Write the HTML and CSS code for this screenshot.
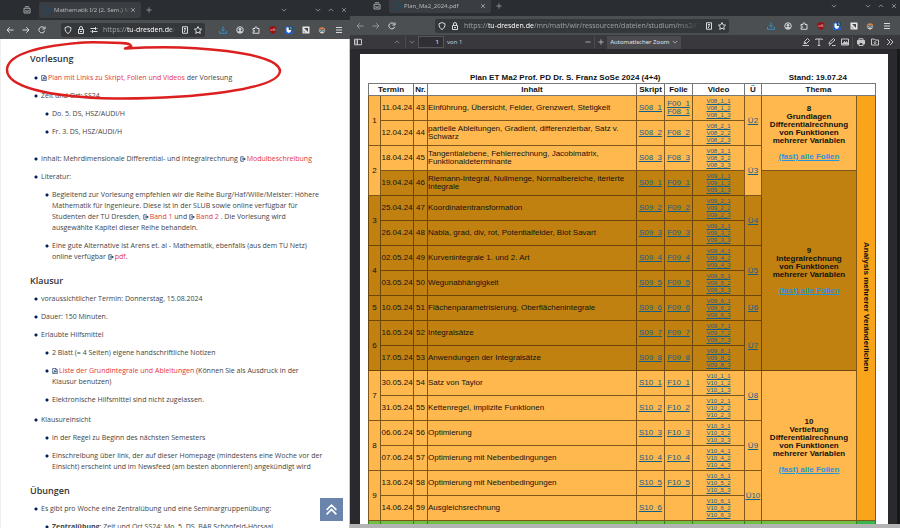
FILE: index.html
```html
<!DOCTYPE html>
<html lang="de">
<head>
    <meta charset="UTF-8">
    <meta name="viewport" content="width=device-width, initial-scale=1.0">
    <title>Mathematik I/2 (2. Sem.)</title>
    <link rel="stylesheet" href="styles.css">
</head>
<body>
    <!-- Icons -->
    <svg class="sprite" aria-hidden="true">
        <symbol id="i-box" viewBox="0 0 16 16"><path d="M4 1.500h8M2 4.500h12v9.500H2zM5.500 8v2.500h5V8"/></symbol>
        <symbol id="i-tu" viewBox="0 0 16 16"><path d="M5 1h6l4 4v6l-4 4H5l-4-4V5zM3 6h5M5.500 6v5M9 6v4l2 2 2-2V6"/></symbol>
        <symbol id="i-close" viewBox="0 0 16 16"><path d="M3 3l10 10M13 3L3 13"/></symbol>
        <symbol id="i-plus" viewBox="0 0 16 16"><path d="M8 1v14M1 8h14"/></symbol>
        <symbol id="i-minus" viewBox="0 0 16 16"><path d="M1 8h14"/></symbol>
        <symbol id="i-down" viewBox="0 0 16 16"><path d="M2 5l6 6 6-6"/></symbol>
        <symbol id="i-up" viewBox="0 0 16 16"><path d="M2 11l6-6 6 6"/></symbol>
        <symbol id="i-back" viewBox="0 0 16 16"><path d="M15 8H2M7.500 2.500L2 8l5.500 5.500"/></symbol>
        <symbol id="i-fwd" viewBox="0 0 16 16"><path d="M1 8h13M8.500 2.500L14 8l-5.500 5.500"/></symbol>
        <symbol id="i-reload" viewBox="0 0 16 16"><path d="M13.500 9.500A6 6 0 1 1 12.500 4M14 1v5H9"/></symbol>
        <symbol id="i-shield" viewBox="0 0 16 16"><path d="M8 1l6 2.500c0 6-2 9.500-6 11.500-4-2-6-5.500-6-11.500z"/></symbol>
        <symbol id="i-lock" viewBox="0 0 16 16"><path d="M3 7h10v8H3zM5 7V4a3 3 0 0 1 6 0v3M6 11h4"/></symbol>
        <symbol id="i-perm" viewBox="0 0 16 16"><path d="M1 5h9M6 11h9M13 5h2M1 11h2M11 2v6M5 8v6"/></symbol>
        <symbol id="i-reader" viewBox="0 0 16 16"><path d="M3 1.500h10v13H3zM6 5h4M6 8h4M6 11h2"/></symbol>
        <symbol id="i-star" viewBox="0 0 16 16"><path d="M8 1l2.200 4.700 5 .6-3.700 3.500 1 5.100L8 12.400l-4.500 2.500 1-5.100L.8 6.300l5-.6z"/></symbol>
        <symbol id="i-load" viewBox="0 0 16 16"><path d="M8 1v9M4 6.500L8 10.500l4-4M1 10v4.500h14V10"/></symbol>
        <symbol id="i-account" viewBox="0 0 16 16"><circle cx="8" cy="8" r="6.500"/><circle cx="8" cy="6.500" r="2" fill="currentColor"/><path d="M4.500 12.500c0-3 7-3 7 0z" fill="currentColor"/></symbol>
        <symbol id="i-ext" viewBox="0 0 16 16"><path d="M2 5h4V3.500a2 2 0 0 1 4 0V5h4v9.500H2v-3h1.500a1.500 1.500 0 0 0 0-3H2z"/></symbol>
        <symbol id="i-ublock" viewBox="0 0 16 16"><path d="M8 0l7 2.500c0 7-2 11-7 13.500C3 13.500 1 9.500 1 2.500z" fill="#9b0f12" stroke="none"/><path d="M4 6v3h2.500V6M9 5.500h3v3.500H9z" stroke="#e9c9c9" stroke-width="1"/></symbol>
        <symbol id="i-bw" viewBox="0 0 16 16"><path d="M0 1h15v15H0z" fill="#1a5fe0" stroke="none"/><path d="M3 3h9v6c0 2-2 4-4.500 5C5 13 3 11 3 9z" fill="#fff" stroke="none"/><path d="M7.500 0H16v8H7.500z" fill="#1d4a66" stroke="none"/><path d="M10 6h3V4h-2.500V2H13" stroke="#a9c6d6" stroke-width="1"/></symbol>
        <symbol id="i-note" viewBox="0 0 16 16"><path d="M1 1h14v14H1z" fill="#e6e6e6" stroke="none"/><path d="M4 4h8v8z" fill="#44484c" stroke="none"/><path d="M3 8l5 5H3z" fill="#9a9da0" stroke="none"/></symbol>
        <symbol id="i-face" viewBox="0 0 16 16"><path d="M1 9c0-9 14-9 14 0z" fill="#e0824c" stroke="none"/><path d="M2 8h12c0 9-12 9-12 0z" fill="#e5d3c5" stroke="none"/><circle cx="5.500" cy="9" r="2" stroke="#2f6a85"/><circle cx="10.500" cy="9" r="2" stroke="#2f6a85"/></symbol>
        <symbol id="i-menu" viewBox="0 0 16 16"><path d="M2 3h12M2 8h12M2 13h12"/></symbol>
        <symbol id="i-side" viewBox="0 0 16 16"><path d="M1 2.500h14v11H1zM7 2.500v11M3 5.500h2M3 8h2M3 10.500h2"/></symbol>
        <symbol id="i-mark" viewBox="0 0 16 16"><path d="M4 11l1-4 6-6 4 4-6 6zM5 7l4 4M1 15h13"/></symbol>
        <symbol id="i-text" viewBox="0 0 16 16"><path d="M1.500 4V2h13v2M8 2v13M5.500 15h5"/></symbol>
        <symbol id="i-pen" viewBox="0 0 16 16"><path d="M2 12l1-4 8-7 3 3-8 7zM8 15h7M2 15l3-2"/></symbol>
        <symbol id="i-image" viewBox="0 0 16 16"><path d="M1 2h14v12H1z"/><path d="M3 12l4-5 2 2 2-2 3 5z" fill="currentColor"/></symbol>
        <symbol id="i-print" viewBox="0 0 16 16"><path d="M4 1.500h8V5H4z"/><path d="M1 5h14v7h-3V9H4v3H1z" fill="currentColor"/><path d="M4 9h8v6H4z"/></symbol>
        <symbol id="i-save" viewBox="0 0 16 16"><path d="M1 14V2h5l2 2h7v10zM8 6v5M5.500 9L8 11.500 10.500 9"/></symbol>
        <symbol id="i-more" viewBox="0 0 16 16"><path d="M2 2l6 6-6 6M8 2l6 6-6 6"/></symbol>
        <symbol id="i-pdf" viewBox="0 0 16 16"><path d="M2 1h8l4 4v10H2zM10 1v4h4M5 12c2-2 3-4 2.500-6C7 8 9 10 12 10c-3 0-5 0-7 2"/></symbol>
        <symbol id="i-out" viewBox="0 0 16 16"><path d="M9 2H2v12h7v-2M9 2v2"/><path d="M5 6.500h5V4l6 4-6 4V9.500H5z" fill="currentColor" stroke="none"/></symbol>
        <symbol id="i-top" viewBox="0 0 16 16"><path d="M2 8.500l6-6 6 6M2 14l6-6 6 6"/></symbol>
    </svg>

    <!-- Linkes Fenster: Webseite -->
    <section class="window window-left">
        <div class="tabs">
            <button class="tab-box" aria-label="Verlauf"><svg class="icon"><use href="#i-box"/></svg></button>
            <div class="tab"><svg class="icon fav"><use href="#i-tu"/></svg><span class="tab-title">Mathematik I/2 (2. Sem.) M</span><button aria-label="Tab schließen"><svg class="icon small"><use href="#i-close"/></svg></button></div>
            <button class="tab-new" aria-label="Neuer Tab"><svg class="icon small"><use href="#i-plus"/></svg></button>
            <div class="window-buttons">
                <button class="tab-list" aria-label="Tabs"><svg class="icon small"><use href="#i-down"/></svg></button>
                <button aria-label="Minimieren"><svg class="icon small"><use href="#i-down"/></svg></button>
                <button aria-label="Maximieren"><svg class="icon small"><use href="#i-up"/></svg></button>
                <button aria-label="Schließen"><svg class="icon small"><use href="#i-close"/></svg></button>
            </div>
        </div>
        <div class="nav">
            <button aria-label="Zurück"><svg class="icon"><use href="#i-back"/></svg></button>
            <button aria-label="Vor"><svg class="icon"><use href="#i-fwd"/></svg></button>
            <button aria-label="Neu laden"><svg class="icon"><use href="#i-reload"/></svg></button>
            <div class="url-bar">
                <svg class="icon"><use href="#i-shield"/></svg>
                <svg class="icon"><use href="#i-lock"/></svg>
                <svg class="icon"><use href="#i-perm"/></svg>
                <div class="url" role="textbox" aria-label="Adresse" contenteditable="true">https://<b>tu-dresden.de</b>/m</div>
                <svg class="icon"><use href="#i-reader"/></svg>
                <svg class="icon"><use href="#i-star"/></svg>
            </div>
            <div class="addons">
                <button class="load" aria-label="Downloads"><svg class="icon"><use href="#i-load"/></svg></button>
                <button aria-label="Konto"><svg class="icon"><use href="#i-account"/></svg></button>
                <button aria-label="Erweiterungen"><svg class="icon"><use href="#i-ext"/></svg></button>
                <button aria-label="Werbeblocker"><svg class="icon"><use href="#i-ublock"/></svg></button>
                <button aria-label="Passwörter"><svg class="icon"><use href="#i-bw"/></svg></button>
                <button aria-label="Notizen"><svg class="icon"><use href="#i-note"/></svg></button>
                <button aria-label="Profil"><svg class="icon"><use href="#i-face"/></svg></button>
                <button aria-label="Menü"><svg class="icon"><use href="#i-menu"/></svg></button>
            </div>
        </div>

        <main class="page">
            <h2>Vorlesung</h2>
            <ul>
                <li><a href="#"><svg class="link-icon"><use href="#i-pdf"/></svg>Plan mit Links zu Skript, Folien und Videos</a> der Vorlesung</li>
                <li>Zeit und Ort: SS24
                    <ul class="times">
                        <li>Do. 5. DS, HSZ/AUDI/H</li>
                        <li>Fr. 3. DS, HSZ/AUDI/H</li>
                    </ul>
                </li>
                <li>Inhalt: Mehrdimensionale Differential- und Integralrechnung <a href="#"><svg class="link-icon"><use href="#i-out"/></svg>Modulbeschreibung</a></li>
                <li>Literatur:
                    <ul>
                        <li>Begleitend zur Vorlesung empfehlen wir die Reihe Burg/Haf/Wille/Meister: Höhere<br>Mathematik für Ingenieure. Diese ist in der SLUB sowie online verfügbar für<br>Studenten der TU Dresden, <a href="#"><svg class="link-icon"><use href="#i-out"/></svg>Band 1</a> und <a href="#"><svg class="link-icon"><use href="#i-out"/></svg>Band 2</a> . Die Vorlesung wird<br>ausgewählte Kapitel dieser Reihe behandeln.</li>
                        <li>Eine gute Alternative ist Arens et. al - Mathematik, ebenfalls (aus dem TU Netz)<br>online verfügbar <a href="#"><svg class="link-icon"><use href="#i-out"/></svg>pdf</a>.</li>
                    </ul>
                </li>
            </ul>
            <h2>Klausur</h2>
            <ul>
                <li>voraussichtlicher Termin: Donnerstag, 15.08.2024</li>
                <li>Dauer: 150 Minuten.</li>
                <li>Erlaubte Hilfsmittel
                    <ul class="tools">
                        <li>2 Blatt (= 4 Seiten) eigene handschriftliche Notizen</li>
                        <li><a href="#"><svg class="link-icon"><use href="#i-pdf"/></svg>Liste der Grundintegrale und Ableitungen</a> (Können Sie als Ausdruck in der<br>Klausur benutzen)</li>
                        <li>Elektronische Hilfsmittel sind nicht zugelassen.</li>
                    </ul>
                </li>
                <li>Klausureinsicht
                    <ul>
                        <li>in der Regel zu Beginn des nächsten Semesters</li>
                        <li>Einschreibung über link, der auf dieser Homepage (mindestens eine Woche vor der<br>Einsicht) erscheint und im Newsfeed (am besten abonnieren!) angekündigt wird</li>
                    </ul>
                </li>
            </ul>
            <h2>Übungen</h2>
            <ul>
                <li>Es gibt pro Woche eine Zentralübung und eine Seminargruppenübung:
                    <ul>
                        <li><b>Zentralübung</b>: Zeit und Ort SS24: Mo. 5. DS, BAR Schönfeld-Hörsaal</li>
                    </ul>
                </li>
            </ul>
        </main>
        <button class="to-top" aria-label="Nach oben"><svg class="icon"><use href="#i-top"/></svg></button>
        <svg class="marker" viewBox="0 0 350 110" aria-hidden="true"><path d="M125 48.500C128 47 132 47 131 46C130 42 118 43 105 42.500C93 42 85 42 77 43C45 46 7 53 7 70C7 86 45 97 115 98.500C190 99 279 90 280 71C279 52 190 44 125 48.500"/></svg>
    </section>

    <!-- Rechtes Fenster: PDF -->
    <section class="window window-right">
        <div class="tabs">
            <button class="tab-box" aria-label="Verlauf"><svg class="icon"><use href="#i-box"/></svg></button>
            <div class="tab"><svg class="icon fav"><use href="#i-tu"/></svg><span class="tab-title">Plan_Ma2_2024.pdf</span><button aria-label="Tab schließen"><svg class="icon small"><use href="#i-close"/></svg></button></div>
            <button class="tab-new" aria-label="Neuer Tab"><svg class="icon small"><use href="#i-plus"/></svg></button>
            <div class="window-buttons">
                <button class="tab-list" aria-label="Tabs"><svg class="icon small"><use href="#i-down"/></svg></button>
                <button aria-label="Minimieren"><svg class="icon small"><use href="#i-down"/></svg></button>
                <button aria-label="Maximieren"><svg class="icon small"><use href="#i-up"/></svg></button>
                <button aria-label="Schließen"><svg class="icon small"><use href="#i-close"/></svg></button>
            </div>
        </div>
        <div class="nav">
            <button class="off" aria-label="Zurück"><svg class="icon"><use href="#i-back"/></svg></button>
            <button class="off" aria-label="Vor"><svg class="icon"><use href="#i-fwd"/></svg></button>
            <button aria-label="Neu laden"><svg class="icon"><use href="#i-reload"/></svg></button>
            <div class="url-bar">
                <svg class="icon"><use href="#i-shield"/></svg>
                <svg class="icon"><use href="#i-lock"/></svg>
                <div class="url" role="textbox" aria-label="Adresse" contenteditable="true">https://<b>tu-dresden.de</b>/mn/math/wir/ressourcen/dateien/studium/ma2/Plan_M</div>
                <svg class="icon"><use href="#i-reader"/></svg>
                <svg class="icon"><use href="#i-star"/></svg>
            </div>
            <div class="addons">
                <button class="load" aria-label="Downloads"><svg class="icon"><use href="#i-load"/></svg></button>
                <button aria-label="Konto"><svg class="icon"><use href="#i-account"/></svg></button>
                <button aria-label="Erweiterungen"><svg class="icon"><use href="#i-ext"/></svg></button>
                <button aria-label="Werbeblocker"><svg class="icon"><use href="#i-ublock"/></svg></button>
                <button aria-label="Passwörter"><svg class="icon"><use href="#i-bw"/></svg></button>
                <button aria-label="Notizen"><svg class="icon"><use href="#i-note"/></svg></button>
                <button aria-label="Profil"><svg class="icon"><use href="#i-face"/></svg></button>
                <button aria-label="Menü"><svg class="icon"><use href="#i-menu"/></svg></button>
            </div>
        </div>
        <div class="pdf-bar">
            <div class="pdf-group pdf-left">
                <button class="sidebar" aria-label="Seitenleiste"><svg class="icon"><use href="#i-side"/></svg></button>
                <button class="off" aria-label="Vorherige Seite"><svg class="icon small"><use href="#i-up"/></svg></button>
                <button class="off" aria-label="Nächste Seite"><svg class="icon small"><use href="#i-down"/></svg></button>
                <input id="page-number" type="text" value="1">
                <label for="page-number">von 1</label>
            </div>
            <div class="pdf-group pdf-zoom">
                <button aria-label="Verkleinern"><svg class="icon small"><use href="#i-minus"/></svg></button>
                <button aria-label="Vergrößern"><svg class="icon small"><use href="#i-plus"/></svg></button>
                <span class="select">
                    <select aria-label="Zoom"><option>Automatischer Zoom</option></select>
                    <svg class="icon small"><use href="#i-down"/></svg>
                </span>
            </div>
            <div class="pdf-group pdf-tools">
                <button aria-label="Hervorheben"><svg class="icon"><use href="#i-mark"/></svg></button>
                <button aria-label="Text"><svg class="icon"><use href="#i-text"/></svg></button>
                <button aria-label="Zeichnen"><svg class="icon"><use href="#i-pen"/></svg></button>
                <button aria-label="Bild"><svg class="icon"><use href="#i-image"/></svg></button>
                <button class="print" aria-label="Drucken"><svg class="icon"><use href="#i-print"/></svg></button>
                <button aria-label="Speichern"><svg class="icon"><use href="#i-save"/></svg></button>
                <button class="more" aria-label="Werkzeuge"><svg class="icon"><use href="#i-more"/></svg></button>
            </div>
        </div>

        <div class="viewer">
            <div class="paper">
                <header class="paper-head">
                    <h1>Plan ET Ma2 Prof. PD Dr. S. Franz SoSe 2024 (4+4)</h1>
                    <strong>Stand: 19.07.24</strong>
                </header>
                <table class="plan">
                    <colgroup>
                        <col class="c-week"><col class="c-date"><col class="c-nr"><col><col class="c-link"><col class="c-link"><col class="c-video"><col class="c-ex"><col class="c-topic"><col class="c-side">
                    </colgroup>
                    <thead>
                        <tr><th colspan="2">Termin</th><th>Nr.</th><th>Inhalt</th><th>Skript</th><th>Folie</th><th>Video</th><th>Ü</th><th colspan="2">Thema</th></tr>
                    </thead>
                    <tbody>
                        <tr>
                            <td rowspan="2">1</td><td>11.04.24</td><td>43</td><td class="text">Einführung, Übersicht, Felder, Grenzwert, Stetigkeit</td>
                            <td><a href="#">S08_1</a></td><td><a href="#">F00_1</a><br><a href="#">F08_1</a></td>
                            <td class="video"><a href="#">V08_1_1</a><a href="#">V08_1_2</a><a href="#">V08_1_3</a></td>
                            <td rowspan="2"><a href="#">Ü2</a></td>
                            <td class="topic" rowspan="3">8<br>Grundlagen<br>Differentialrechnung<br>von Funktionen<br>mehrerer Variablen<br><br><a href="#">(fast) alle Folien</a></td>
                            <td class="side" rowspan="17"><span>Analysis mehrerer Veränderlichen</span></td>
                        </tr>
                        <tr>
                            <td>12.04.24</td><td>44</td><td class="text">partielle Ableitungen, Gradient, differenzierbar, Satz v.<br>Schwarz</td>
                            <td><a href="#">S08_2</a></td><td><a href="#">F08_2</a></td>
                            <td class="video"><a href="#">V08_2_1</a><a href="#">V08_2_2</a><a href="#">V08_2_3</a></td>
                        </tr>
                        <tr>
                            <td rowspan="2">2</td><td>18.04.24</td><td>45</td><td class="text">Tangentialebene, Fehlerrechnung, Jacobimatrix,<br>Funktionaldeterminante</td>
                            <td><a href="#">S08_3</a></td><td><a href="#">F08_3</a></td>
                            <td class="video"><a href="#">V08_3_1</a><a href="#">V08_3_2</a><a href="#">V08_3_3</a></td>
                            <td rowspan="2"><a href="#">Ü3</a></td>
                        </tr>
                        <tr class="integral">
                            <td>19.04.24</td><td>46</td><td class="text">Riemann-Integral, Nullmenge, Normalbereiche, iterierte<br>Integrale</td>
                            <td><a href="#">S09_1</a></td><td><a href="#">F09_1</a></td>
                            <td class="video"><a href="#">V09_1_1</a><a href="#">V09_1_2</a><a href="#">V09_1_3</a></td>
                            <td class="topic" rowspan="8">9<br>Integralrechnung<br>von Funktionen<br>mehrerer Variablen<br><br><a href="#">(fast) alle Folien</a></td>
                        </tr>
                        <tr class="integral">
                            <td rowspan="2">3</td><td>25.04.24</td><td>47</td><td class="text">Koordinatentransformation</td>
                            <td><a href="#">S09_2</a></td><td><a href="#">F09_2</a></td>
                            <td class="video"><a href="#">V09_2_1</a><a href="#">V09_2_2</a><a href="#">V09_2_3</a></td>
                            <td rowspan="2"><a href="#">Ü4</a></td>
                        </tr>
                        <tr class="integral">
                            <td>26.04.24</td><td>48</td><td class="text">Nabla, grad, div, rot, Potentialfelder, Biot Savart</td>
                            <td><a href="#">S09_3</a></td><td><a href="#">F09_3</a></td>
                            <td class="video"><a href="#">V09_3_1</a><a href="#">V09_3_2</a><a href="#">V09_3_3</a></td>
                        </tr>
                        <tr class="integral">
                            <td rowspan="2">4</td><td>02.05.24</td><td>49</td><td class="text">Kurvenintegrale 1. und 2. Art</td>
                            <td><a href="#">S09_4</a></td><td><a href="#">F09_4</a></td>
                            <td class="video"><a href="#">V09_4_1</a><a href="#">V09_4_2</a><a href="#">V09_4_3</a></td>
                            <td rowspan="2"><a href="#">Ü5</a></td>
                        </tr>
                        <tr class="integral">
                            <td>03.05.24</td><td>50</td><td class="text">Wegunabhängigkeit</td>
                            <td><a href="#">S09_5</a></td><td><a href="#">F09_5</a></td>
                            <td class="video"><a href="#">V09_5_1</a><a href="#">V09_5_2</a><a href="#">V09_5_3</a></td>
                        </tr>
                        <tr class="integral">
                            <td>5</td><td>10.05.24</td><td>51</td><td class="text">Flächenparametrisierung, Oberflächenintegrale</td>
                            <td><a href="#">S09_6</a></td><td><a href="#">F09_6</a></td>
                            <td class="video"><a href="#">V09_6_1</a><a href="#">V09_6_2</a><a href="#">V09_6_3</a></td>
                            <td><a href="#">Ü6</a></td>
                        </tr>
                        <tr class="integral">
                            <td rowspan="2">6</td><td>16.05.24</td><td>52</td><td class="text">Integralsätze</td>
                            <td><a href="#">S09_7</a></td><td><a href="#">F09_7</a></td>
                            <td class="video"><a href="#">V09_7_1</a><a href="#">V09_7_2</a><a href="#">V09_7_3</a></td>
                            <td rowspan="2"><a href="#">Ü7</a></td>
                        </tr>
                        <tr class="integral">
                            <td>17.05.24</td><td>53</td><td class="text">Anwendungen der Integralsätze</td>
                            <td><a href="#">S09_8</a></td><td><a href="#">F09_8</a></td>
                            <td class="video"><a href="#">V09_8_1</a><a href="#">V09_8_2</a><a href="#">V09_8_3</a></td>
                        </tr>
                        <tr>
                            <td rowspan="2">7</td><td>30.05.24</td><td>54</td><td class="text">Satz von Taylor</td>
                            <td><a href="#">S10_1</a></td><td><a href="#">F10_1</a></td>
                            <td class="video"><a href="#">V10_1_1</a><a href="#">V10_1_2</a><a href="#">V10_1_3</a></td>
                            <td rowspan="2"><a href="#">Ü8</a></td>
                            <td class="topic" rowspan="6">10<br>Vertiefung<br>Differentialrechnung<br>von Funktionen<br>mehrerer Variablen<br><br><a href="#">(fast) alle Folien</a></td>
                        </tr>
                        <tr>
                            <td>31.05.24</td><td>55</td><td class="text">Kettenregel, implizite Funktionen</td>
                            <td><a href="#">S10_2</a></td><td><a href="#">F10_2</a></td>
                            <td class="video"><a href="#">V10_2_1</a><a href="#">V10_2_2</a><a href="#">V10_2_3</a></td>
                        </tr>
                        <tr>
                            <td rowspan="2">8</td><td>06.06.24</td><td>56</td><td class="text">Optimierung</td>
                            <td><a href="#">S10_3</a></td><td><a href="#">F10_3</a></td>
                            <td class="video"><a href="#">V10_3_1</a><a href="#">V10_3_2</a><a href="#">V10_3_3</a></td>
                            <td rowspan="2"><a href="#">Ü9</a></td>
                        </tr>
                        <tr>
                            <td>07.06.24</td><td>57</td><td class="text">Optimierung mit Nebenbedingungen</td>
                            <td><a href="#">S10_4</a></td><td><a href="#">F10_4</a></td>
                            <td class="video"><a href="#">V10_4_1</a><a href="#">V10_4_2</a><a href="#">V10_4_3</a></td>
                        </tr>
                        <tr>
                            <td rowspan="2">9</td><td>13.06.24</td><td>58</td><td class="text">Optimierung mit Nebenbedingungen</td>
                            <td><a href="#">S10_5</a></td><td><a href="#">F10_5</a></td>
                            <td class="video"><a href="#">V10_5_1</a><a href="#">V10_5_2</a><a href="#">V10_5_3</a></td>
                            <td rowspan="2"><a href="#">Ü10</a></td>
                        </tr>
                        <tr>
                            <td>14.06.24</td><td>59</td><td class="text">Ausgleichsrechnung</td>
                            <td><a href="#">S10_6</a></td><td></td>
                            <td class="video"><a href="#">V10_6_1</a><a href="#">V10_6_2</a><a href="#">V10_6_3</a></td>
                        </tr>
                        <tr class="green"><td></td><td></td><td></td><td></td><td></td><td></td><td></td><td></td><td></td><td class="side"></td></tr>
                    </tbody>
                </table>
            </div>
        </div>
        <div class="bottom-edge"></div>
    </section>
</body>
</html>
```
FILE: styles.css
```css
* {
    box-sizing: border-box;
}
body {
    margin: 0;
    height: 100vh;
    display: grid;
    grid-template-columns: 7fr 11fr;
    overflow: hidden;
    font-family: "Noto Sans", sans-serif;
    font-size: 7px;
    background: #2a2e32;
}
button {
    display: flex;
    align-items: center;
    justify-content: center;
    padding: 0;
    border: none;
    background: none;
    color: inherit;
    font: inherit;
    cursor: pointer;
}
.sprite {
    position: absolute;
    width: 0;
    height: 0;
}
.icon {
    width: 8px;
    height: 8px;
    flex: none;
    fill: none;
    stroke: currentColor;
    stroke-width: 2;
}
.icon.small {
    width: 6px;
    height: 6px;
}

/* Fenster */
.window {
    position: relative;
    display: flex;
    flex-direction: column;
    min-width: 0;
    height: 100vh;
    overflow: hidden;
    color: #d8d9da;
}
.tabs {
    display: flex;
    align-items: center;
    flex: none;
    height: 20px;
    padding-left: 19px;
    background: #2a2e32;
    color: #a4a7a9;
}
.tab-box {
    width: 16px;
    margin-right: 4px;
}
.tab {
    display: flex;
    align-items: center;
    width: 102px;
    height: 16px;
    padding: 0 5px 0 4px;
    border-radius: 2px;
    background: #3a3e42;
    color: #b4b7b9;
}
.fav {
    color: #1f4a63;
}
.tab-title {
    flex: 1;
    min-width: 0;
    margin-left: 3px;
    overflow: hidden;
    white-space: nowrap;
    font-size: 6px;
    mask-image: linear-gradient(to right, #000 85%, transparent);
}
.tab-new {
    width: 16px;
}
.window-buttons {
    display: flex;
    margin-left: auto;
}
.window-buttons button {
    width: 13px;
}
.window-buttons .tab-list {
    margin-right: 21px;
}
.nav {
    display: flex;
    align-items: center;
    flex: none;
    height: 19px;
    padding: 0 3px 0 2px;
    background: #4b4f52;
}
.nav button {
    width: 16px;
    height: 16px;
}
.off {
    color: #929597;
}
.url-bar {
    display: flex;
    align-items: center;
    gap: 5px;
    flex: 1;
    min-width: 0;
    height: 14px;
    margin: 0 10px 0 11px;
    padding: 0 3px;
    border-radius: 2px;
    background: #35383b;
}
.url {
    flex: 1;
    min-width: 0;
    overflow: hidden;
    white-space: nowrap;
    color: #a0a3a5;
    font-family: "Open Sans", sans-serif;
    mask-image: linear-gradient(to right, #000 90%, transparent);
}
.url b {
    font-weight: 400;
    color: #fff;
}
.addons {
    display: flex;
    justify-content: space-between;
    flex: 0 0 132px;
}
.addons .load {
    color: #3a8fc0;
}
.window-right .tabs {
    height: 16px;
    padding-bottom: 4px;
}
.window-right .tab {
    height: 14px;
}
.window-right .nav {
    padding-right: 5px;
}
.window-right .url-bar {
    margin: 0 34px 0 35px;
}

/* Webseite */
.page {
    flex: 1;
    padding: 13px 20px 0 29px;
    overflow: hidden;
    background: #fff;
    border-left: 1px solid #eee;
    border-right: 1px solid #c8c8c8;
    color: #444;
    font-family: "Open Sans", sans-serif;
    font-size: 7px;
    line-height: 11px;
}
.page h2 {
    margin: 12px 0 5px;
    font-size: 9px;
    font-weight: 600;
    line-height: 14px;
    color: #333;
}
.page h2:first-child {
    margin: 0 0 6px;
}
.page ul {
    margin: 0;
    padding: 0;
    list-style: none;
}
.page li {
    margin-top: 7px;
    padding-left: 11px;
    background: radial-gradient(circle at 6px 6px, #00205e 1px, transparent 2px);
    white-space: nowrap;
}
.page h2 + ul > li:first-child {
    margin-top: 0;
}
.page .times {
    margin-bottom: 16px;
}
.page .tools {
    margin-bottom: 9px;
}
.page a {
    color: #e5353b;
    text-decoration: none;
}
.link-icon {
    width: 6px;
    height: 6px;
    margin-right: 1px;
    fill: none;
    stroke: currentColor;
    stroke-width: 2;
    color: #1c3f70;
    vertical-align: -1px;
}
.to-top {
    position: absolute;
    right: 7px;
    bottom: 7px;
    width: 23px;
    height: 23px;
    background: #6a84ab;
    color: #fff;
}
.to-top .icon {
    width: 13px;
    height: 13px;
}
.marker {
    position: absolute;
    top: 0;
    left: 0;
    width: 350px;
    height: 110px;
    fill: none;
    stroke: #dc1f1f;
    stroke-width: 2.5;
    stroke-linecap: round;
    pointer-events: none;
}

/* PDF-Leiste */
.pdf-bar {
    display: flex;
    align-items: center;
    justify-content: space-between;
    flex: none;
    height: 14px;
    padding: 0 3px 0 1px;
    background: #38383d;
    color: #c9c9cb;
    font-size: 6px;
}
.pdf-group {
    display: flex;
    align-items: center;
}
.pdf-bar button {
    width: 13px;
    height: 13px;
}
.pdf-left .sidebar {
    margin-right: 26px;
}
.pdf-left .off + .off {
    margin-left: 2px;
    border-left: 1px solid #4a4a4f;
}
.pdf-left input {
    width: 26px;
    height: 12px;
    margin-right: 3px;
    padding: 0 4px;
    border: 1px solid #55555a;
    background: #2f2f34;
    color: #eee;
    font: inherit;
    text-align: right;
}
.pdf-zoom button + button {
    border-left: 1px solid #4a4a4f;
}
.select {
    display: flex;
    align-items: center;
    width: 74px;
    height: 13px;
    padding: 0 3px;
    background: #4a4a4f;
}
.select select {
    flex: 1;
    min-width: 0;
    padding: 0;
    border: none;
    appearance: none;
    background: none;
    color: #e2e2e3;
    font: inherit;
}
.pdf-tools .print {
    width: 17px;
    border-left: 1px solid #4a4a4f;
}
.pdf-tools .more {
    margin-left: 2px;
}

/* PDF-Seite */
.viewer {
    flex: 1;
    min-height: 0;
    padding: 5px 9px 0 10px;
    overflow: hidden;
    background: #2a2a2e;
    border-right: 3px solid #17181a;
}
.paper {
    padding: 18px 12px 0 8px;
    background: #fff;
    color: #111;
    font-family: "Liberation Sans", Arial, sans-serif;
    font-size: 8px;
    line-height: 8px;
}
.paper-head {
    display: flex;
    align-items: center;
    justify-content: space-between;
    height: 11px;
    padding: 0 29px 0 102px;
}
.paper-head h1 {
    margin: 0;
    font-size: 8px;
}
.plan {
    width: 100%;
    table-layout: fixed;
    border-collapse: collapse;
}
.c-week {
    width: 12px;
}
.c-date {
    width: 33px;
}
.c-nr {
    width: 14px;
}
.c-link {
    width: 28px;
}
.c-video {
    width: 52px;
}
.c-ex {
    width: 17px;
}
.c-topic {
    width: 95px;
}
.c-side {
    width: 19px;
}
.plan th {
    height: 12px;
    padding: 0;
    border: 1px solid #777;
}
.plan td {
    height: 25px;
    padding: 0;
    border: 1px solid #80571a;
    background: #ffb84d;
    text-align: center;
    white-space: nowrap;
}
.plan .integral td {
    background: #c18111;
    border-color: #6b4608;
}
.plan .text {
    text-align: left;
}
.plan a {
    color: #12608a;
}
.plan .video a {
    display: block;
    font-size: 6px;
    line-height: 7px;
}
.plan .topic {
    font-weight: bold;
}
.plan .topic a {
    color: #2b93d8;
}
.plan .side {
    background: #faa41a;
    font-weight: bold;
}
.plan .side span {
    writing-mode: vertical-rl;
}
.plan .green td {
    background: #71bf44;
    border-color: #3f7a25;
}
.plan .green .side {
    background: #3bb54a;
}
.bottom-edge {
    flex: none;
    height: 4px;
    background: #b4b4b4;
}
```
